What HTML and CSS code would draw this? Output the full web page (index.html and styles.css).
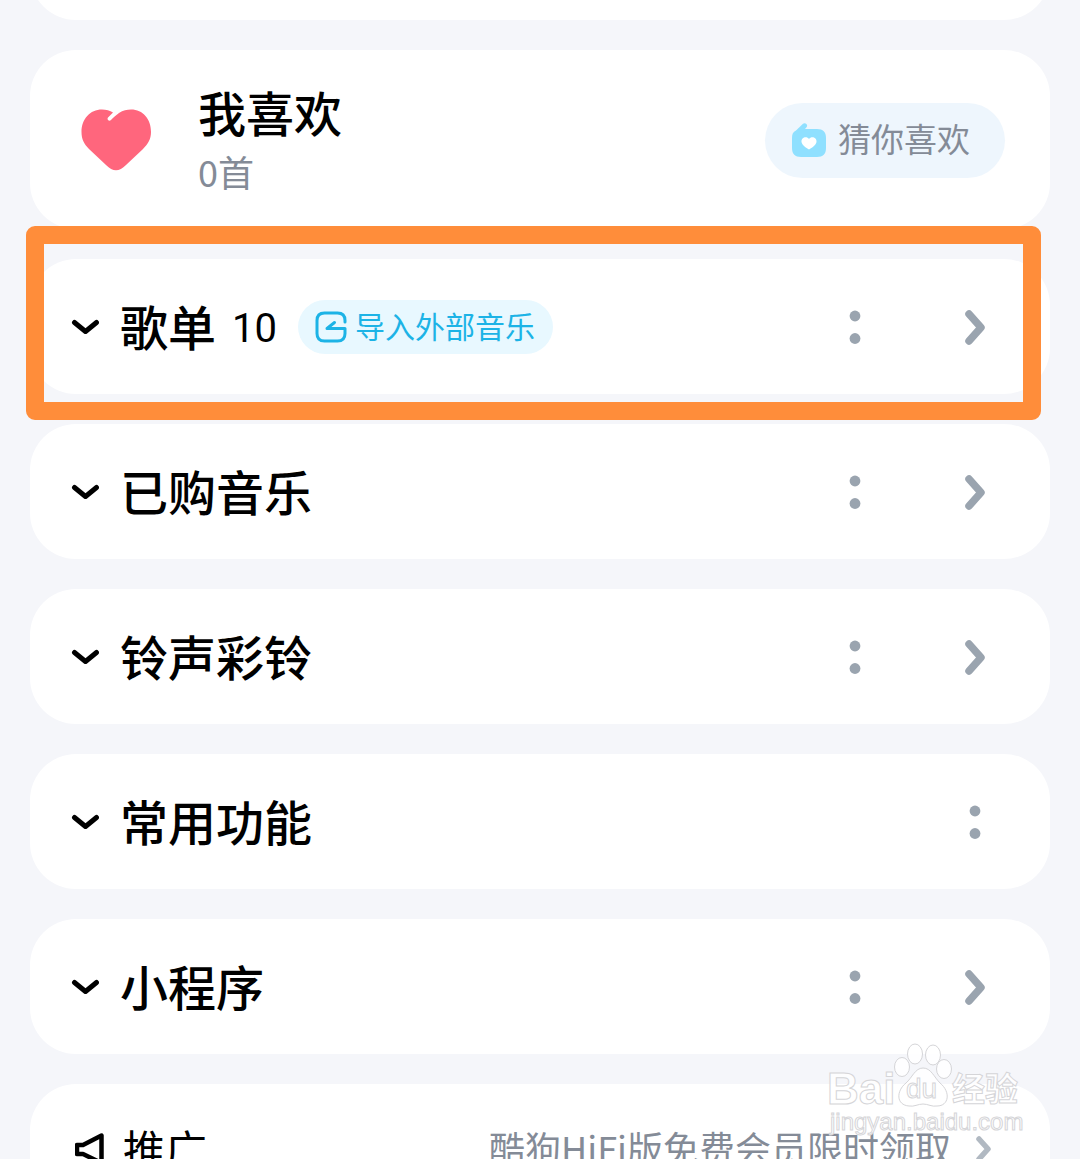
FILE: index.html
```html
<!DOCTYPE html>
<html lang="zh-CN">
<head>
  <meta charset="UTF-8">
  <meta name="viewport" content="width=device-width, initial-scale=1.0">
  <title>我的音乐</title>
  <link rel="stylesheet" href="styles.css">
</head>
<body>
  <!-- shared icons -->
  <svg class="sprite" aria-hidden="true">
    <symbol id="down" viewBox="0 0 28 28">
      <path d="M3.500 9.500 L14.500 18.500 L25.500 9.500" fill="none" stroke="#000" stroke-width="5" stroke-linecap="round" stroke-linejoin="round"/>
    </symbol>
    <symbol id="dots" viewBox="0 0 40 40">
      <circle cx="20" cy="9" r="5.400"/>
      <circle cx="20" cy="31.500" r="5.400"/>
    </symbol>
    <symbol id="next" viewBox="0 0 40 40">
      <path d="M14 7 L26 20.500 L14 34" fill="none" stroke="currentColor" stroke-width="7.500" stroke-linecap="round" stroke-linejoin="round"/>
    </symbol>
  </svg>

  <main class="feed">
    <div class="card"></div>

    <section class="card favorite">
      <svg class="heart" viewBox="0 0 70 62" aria-hidden="true">
        <path d="M38 4 C42 1 46 0.500 50 0.500 C62 0.500 70 10 70 23 C70 30 67 35 62 40 L45 56 C38 63 32 63 25 56 L8 40 C3 35 0.500 30 0.500 23 C0.500 10 9 0.500 21 0.500 C25 0.500 29 1.500 32 3.500 L27 8.500 C25.500 10.500 28 13 30 11 C32 9 35 6 38 4 Z" fill="#ff667d"/>
      </svg>
      <div class="favorite-info">
        <h2 class="title">我喜欢</h2>
        <p class="count">0首</p>
      </div>
      <button class="guess" type="button">
        <svg class="guess-icon" viewBox="0 0 34 34" aria-hidden="true">
          <path d="M4 7.500 L11 0.800 C13.500 -1 16.500 2 14.500 4.300 L13 6 H25 C31 6 34 9 34 15 V25 C34 31 31 34 25 34 H9 C3 34 0 31 0 25 V15 C0 11 1 9 4 7.500 Z" fill="#8fe0ff"/>
          <path d="M17 16 C19 13 25 14 24.500 19 C24 22 20 25 17 26.500 C14 25 10 22 9.500 19 C9 14 15 13 17 16 Z" fill="#fff"/>
        </svg>
        <span class="label">猜你喜欢</span>
      </button>
    </section>

    <section class="card row highlight">
      <button class="toggle" type="button" aria-label="展开"><svg><use href="#down"/></svg></button>
      <h2 class="title">歌单</h2>
      <span class="total">10</span>
      <button class="import" type="button">
        <svg class="import-icon" viewBox="0 0 32 32" aria-hidden="true">
          <path d="M30 11 V9.500 C30 4.500 27.500 2 22.500 2 H9.500 C4.500 2 2 4.500 2 9.500 V22.500 C2 27.500 4.500 30 9.500 30 H22.500 C27.500 30 30 27.500 30 22.500 V17.500 H12 L19.500 11.500" fill="none" stroke="currentColor" stroke-width="3" stroke-linecap="round" stroke-linejoin="round"/>
        </svg>
        <span class="label">导入外部音乐</span>
      </button>
      <div class="actions">
        <button class="action" type="button" aria-label="更多"><svg><use href="#dots"/></svg></button>
        <button class="action" type="button" aria-label="进入"><svg><use href="#next"/></svg></button>
      </div>
    </section>

    <section class="card row">
      <button class="toggle" type="button" aria-label="展开"><svg><use href="#down"/></svg></button>
      <h2 class="title">已购音乐</h2>
      <div class="actions">
        <button class="action" type="button" aria-label="更多"><svg><use href="#dots"/></svg></button>
        <button class="action" type="button" aria-label="进入"><svg><use href="#next"/></svg></button>
      </div>
    </section>

    <section class="card row">
      <button class="toggle" type="button" aria-label="展开"><svg><use href="#down"/></svg></button>
      <h2 class="title">铃声彩铃</h2>
      <div class="actions">
        <button class="action" type="button" aria-label="更多"><svg><use href="#dots"/></svg></button>
        <button class="action" type="button" aria-label="进入"><svg><use href="#next"/></svg></button>
      </div>
    </section>

    <section class="card row">
      <button class="toggle" type="button" aria-label="展开"><svg><use href="#down"/></svg></button>
      <h2 class="title">常用功能</h2>
      <div class="actions">
        <button class="action" type="button" aria-label="更多"><svg><use href="#dots"/></svg></button>
      </div>
    </section>

    <section class="card row">
      <button class="toggle" type="button" aria-label="展开"><svg><use href="#down"/></svg></button>
      <h2 class="title">小程序</h2>
      <div class="actions">
        <button class="action" type="button" aria-label="更多"><svg><use href="#dots"/></svg></button>
        <button class="action" type="button" aria-label="进入"><svg><use href="#next"/></svg></button>
      </div>
    </section>

    <section class="card promo">
      <svg class="horn" viewBox="0 0 30 32" aria-hidden="true">
        <path d="M2 12 H8 L26.500 2.500 V30 L8 21 H2 Z" fill="none" stroke="#000" stroke-width="4.500" stroke-linejoin="round"/>
      </svg>
      <h2 class="promo-title label">推广</h2>
      <a class="promo-link" href="#">
        <span class="label">酷狗HiFi版免费会员限时领取</span>
        <svg class="promo-next" viewBox="0 0 16 28" aria-hidden="true">
          <path d="M3 4 L12 14 L3 24" fill="none" stroke="#b1b9c2" stroke-width="5.500" stroke-linecap="round" stroke-linejoin="round"/>
        </svg>
      </a>
    </section>
  </main>

  <svg class="watermark" viewBox="0 0 200 96" aria-hidden="true">
    <g class="mark">
      <ellipse cx="76" cy="25" rx="7.500" ry="9.500"/>
      <ellipse cx="89" cy="12" rx="7.500" ry="10"/>
      <ellipse cx="107" cy="13" rx="7.500" ry="10"/>
      <ellipse cx="118" cy="27" rx="7.500" ry="9.500"/>
      <path d="M97 26 C105 26 108 35 114 41 C125 50 123 64 111 64 C106 65 102 62 97 62 C92 62 88 65 83 64 C70 63 70 49 80 41 C86 36 89 26 97 26 Z"/>
      <text class="mark-latin" x="1" y="62">Bai</text>
      <text class="mark-du" x="80" y="56">du</text>
      <text class="mark-cn" x="126" y="59">经验</text>
      <text class="mark-url" x="4" y="88">jingyan.baidu.com</text>
    </g>
  </svg>
</body>
</html>
```

FILE: styles.css
```css
* {
  box-sizing: border-box;
}

body {
  position: relative;
  height: 100vh;
  margin: 0;
  overflow: hidden;
  background-color: #f5f6fa;
  color: #000;
  font-family: "Noto Sans CJK SC", sans-serif;
}

h2, p {
  margin: 0;
}

button {
  padding: 0;
  border: none;
  background: none;
  font-family: inherit;
  cursor: pointer;
}

svg {
  display: block;
  flex: none;
}

.sprite {
  position: absolute;
  width: 0;
  height: 0;
}

/* the list is scrolled, the first card is mostly above the window */
.feed {
  display: flex;
  flex-direction: column;
  gap: 30px;
  margin-top: -115px;
  padding: 0 30px;
}

.card {
  display: flex;
  align-items: center;
  flex: none;
  min-height: 135px;
  border-radius: 46px;
  background-color: #fff;
}

.title {
  font-size: 48px;
  font-weight: 500;
  line-height: 64px;
}

/* CJK glyphs sit low in the line box */
.row .title,
.label {
  padding-bottom: 4px;
}

/* favorites */
.favorite {
  min-height: 179px;
  padding: 1px 45px 0 51px;
}

.heart {
  width: 70px;
  height: 62px;
}

.favorite-info {
  flex: 1;
  margin-left: 47px;
  padding-bottom: 2px;
}

.count {
  color: #848b97;
  font-size: 36px;
  line-height: 56px;
}

.guess {
  display: flex;
  align-items: center;
  gap: 12px;
  height: 75px;
  padding: 0 35px 0 27px;
  border-radius: 38px;
  background-color: #eef6fd;
  color: #848b97;
  font-size: 33px;
}

.guess-icon {
  width: 34px;
  height: 34px;
}

/* rows */
.row {
  padding: 0 15px 0 41px;
}

.toggle {
  margin-right: 21px;
}

.toggle svg {
  width: 28px;
  height: 28px;
}

.total {
  margin-left: 16px;
  padding-top: 3px;
  font-family: Roboto, sans-serif;
  font-size: 40px;
}

.import {
  display: flex;
  align-items: center;
  gap: 8px;
  height: 54px;
  margin-left: 21px;
  padding: 0 18px 0 17px;
  border-radius: 27px;
  background-color: #e8f8ff;
  color: #1cb3e6;
  font-size: 30px;
}

.import-icon {
  width: 32px;
  height: 32px;
}

.actions {
  display: flex;
  margin-left: auto;
}

.action {
  display: flex;
  align-items: center;
  justify-content: center;
  width: 120px;
  height: 120px;
  color: #9aa4af;
}

.action svg {
  width: 40px;
  height: 40px;
  fill: currentColor;
}

.highlight {
  position: relative;
}

.highlight::after {
  content: "";
  position: absolute;
  top: -33px;
  right: 9px;
  bottom: -26px;
  left: -4px;
  border: 18px solid #ff8d3a;
  border-radius: 9px;
  pointer-events: none;
}

/* promo */
.promo {
  min-height: 130px;
  padding: 0 58px 0 45px;
}

.horn {
  width: 30px;
  height: 32px;
}

.promo-title {
  margin-left: 18px;
  font-size: 42px;
  font-weight: 400;
}

.promo-link {
  display: flex;
  align-items: center;
  gap: 25px;
  margin-left: auto;
  color: #848b97;
  font-size: 36px;
  text-decoration: none;
}

.promo-next {
  width: 16px;
  height: 28px;
}

/* watermark */
.watermark {
  position: absolute;
  right: 54px;
  bottom: 21px;
  width: 200px;
  height: 96px;
  overflow: visible;
  pointer-events: none;
}

.mark {
  fill: #fff;
  fill-opacity: 0.85;
  stroke: #d5d5d8;
  stroke-width: 1px;
}

.mark text {
  font-family: "Liberation Sans", "Noto Sans CJK SC", sans-serif;
}

.mark .mark-latin {
  font-size: 44px;
  font-weight: 700;
}

.mark .mark-du {
  font-size: 28px;
}

.mark .mark-cn {
  font-size: 33px;
  font-weight: 700;
}

.mark .mark-url {
  font-size: 24px;
}
```
